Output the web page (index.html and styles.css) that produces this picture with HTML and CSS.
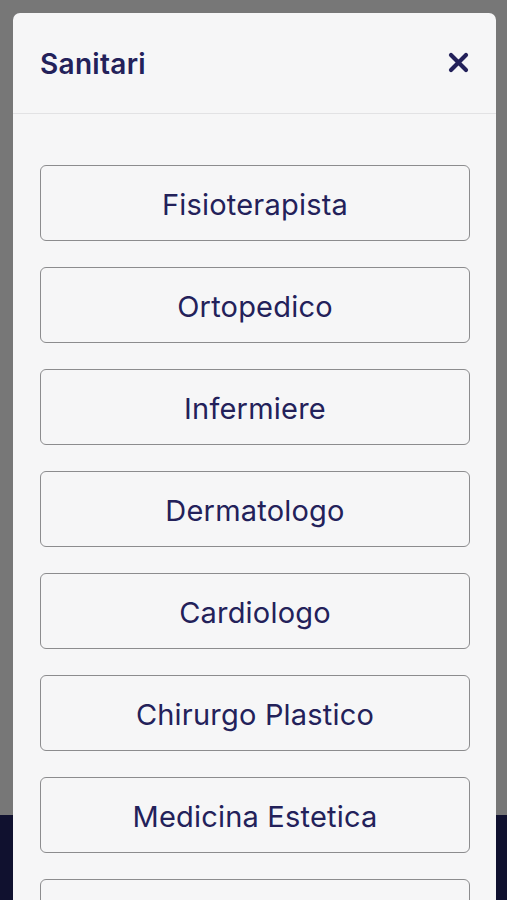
FILE: index.html
```html
<!DOCTYPE html>
<html lang="it">
<head>
<meta charset="utf-8">
<title>Sanitari</title>
<link rel="stylesheet" href="styles.css">
</head>
<body>
<div class="page">
  <div class="backdrop"></div>
  <div class="bottom-bar"></div>
</div>
<div class="modal">
  <div class="modal-header">
    <h2 class="modal-title">Sanitari</h2>
    <button class="close" aria-label="Chiudi">
      <svg width="21" height="21" viewBox="0 0 21 21"><path d="M3 3 L18 18 M18 3 L3 18" stroke="#23215a" stroke-width="4.2" stroke-linecap="round"/></svg>
    </button>
  </div>
  <div class="modal-body">
    <button class="option">Fisioterapista</button>
    <button class="option">Ortopedico</button>
    <button class="option">Infermiere</button>
    <button class="option">Dermatologo</button>
    <button class="option">Cardiologo</button>
    <button class="option">Chirurgo Plastico</button>
    <button class="option">Medicina Estetica</button>
    <button class="option" aria-label="Nutrizionista"></button>
  </div>
</div>
</body>
</html>
```
FILE: styles.css
```css
html, body {
  margin: 0;
  padding: 0;
  height: 900px;
  overflow: hidden;
  font-family: Inter, "Noto Sans", sans-serif;
}
.page {
  display: flex;
  flex-direction: column;
  height: 900px;
}
.backdrop {
  height: 815px;
  background: #777777;
}
.bottom-bar {
  flex: 1;
  background: #10112f;
}
.modal {
  position: absolute;
  top: 13px;
  left: 13px;
  width: 483px;
  height: 1000px;
  background: #f6f6f7;
  border-radius: 7px;
  overflow: hidden;
}
.modal-header {
  height: 101px;
  border-bottom: 1.5px solid #e2e2e4;
  display: flex;
  align-items: center;
  justify-content: space-between;
  padding: 0 27px 0 27px;
  box-sizing: border-box;
}
.modal-title {
  margin: 0;
  font-size: 28px;
  font-weight: 600;
  color: #23215a;
  letter-spacing: 0.3px;
  padding-top: 2px;
}
.close {
  background: none;
  border: 0;
  padding: 0;
  margin-bottom: 2px;
  width: 21px;
  height: 21px;
  display: flex;
}
.modal-body {
  display: flex;
  flex-direction: column;
  gap: 26px;
  padding: 51px 26px 0 27px;
}
.option {
  height: 76px;
  width: 430px;
  background: #f6f6f7;
  border: 1.5px solid #8c8c8e;
  border-radius: 6px;
  font-family: Inter, "Noto Sans", sans-serif;
  font-size: 29px;
  font-weight: 400;
  letter-spacing: 0.2px;
  color: #23215a;
  padding: 2px 0 0 0;
}
```
